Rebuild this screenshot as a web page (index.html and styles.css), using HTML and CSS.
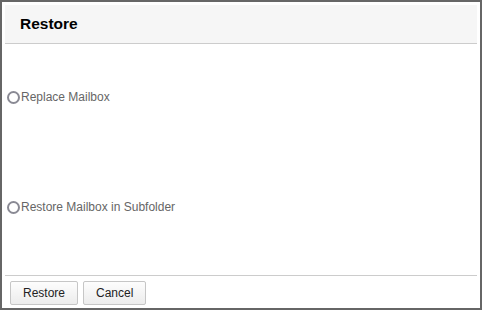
FILE: index.html
```html
<!DOCTYPE html>
<html lang="en">
<head>
    <meta charset="UTF-8">
    <title>Restore</title>
    <link rel="stylesheet" href="styles.css">
</head>
<body>
    <div class="dialog">
        <div class="dialog-header">Restore</div>
        <div class="dialog-body">
            <label class="option">
                <span class="radio"></span>Replace Mailbox
            </label>
            <label class="option">
                <span class="radio"></span>Restore Mailbox in Subfolder
            </label>
        </div>
        <div class="dialog-footer">
            <button class="btn">Restore</button>
            <button class="btn">Cancel</button>
        </div>
    </div>
</body>
</html>
```

FILE: styles.css
```css
body {
    margin: 0;
    font-family: "Liberation Sans", Arial, sans-serif;
    background-color: #fff;
}

.dialog {
    box-sizing: border-box;
    width: 482px;
    height: 310px;
    border: 2px solid #666;
    padding: 3px;
    display: flex;
    flex-direction: column;
}

.dialog-header {
    flex-shrink: 0;
    height: 38px;
    background-color: #f6f6f6;
    border-bottom: 1px solid #ccc;
    padding-left: 15px;
    display: flex;
    align-items: center;
    font-size: 15.5px;
    font-weight: bold;
    color: #000;
}

.dialog-body {
    flex: 1;
    padding: 46px 0 0 2px;
}

.option {
    display: flex;
    align-items: center;
    height: 14px;
    margin-bottom: 96px;
    font-size: 12px;
    color: #666;
}

.option:last-child {
    margin-bottom: 0;
}

.radio {
    box-sizing: border-box;
    width: 13px;
    height: 13px;
    border: 2px solid #8a8a94;
    border-radius: 50%;
    margin-right: 1px;
}

.dialog-footer {
    flex-shrink: 0;
    border-top: 1px solid #ccc;
    padding: 5px 0 0 5px;
    display: flex;
    gap: 5px;
}

.btn {
    height: 24px;
    padding: 0 12px;
    border: 1px solid #c6c6c6;
    border-radius: 2px;
    background: linear-gradient(#fdfdfd, #ececec);
    font-family: "Liberation Sans", Arial, sans-serif;
    font-size: 12px;
    color: #222;
}
```
